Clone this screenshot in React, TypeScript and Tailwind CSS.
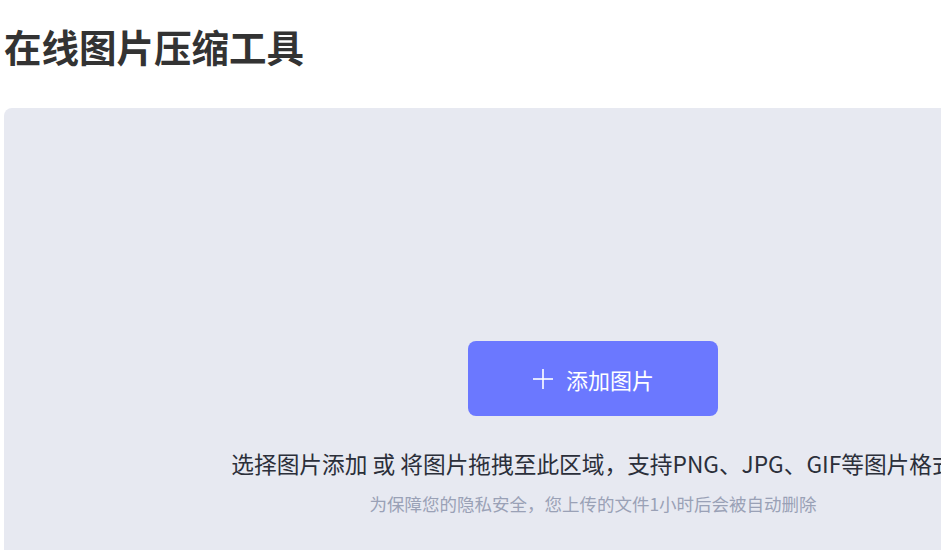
import React from 'react';

const PlusIcon: React.FC = () => (
  <svg width="22" height="22" viewBox="0 0 22 22" fill="none" stroke="currentColor" strokeWidth="1.6">
    <line x1="11" y1="1" x2="11" y2="21" />
    <line x1="1" y1="11" x2="21" y2="11" />
  </svg>
);

const App: React.FC = () => {
  return (
    <div
      className="w-[1186px] bg-white px-1 pt-[18px]"
      style={{ fontFamily: '"Noto Sans CJK SC", "Noto Sans", sans-serif' }}
    >
      {/* 标题 */}
      <h1 className="text-[37.5px] font-bold leading-[56px] text-[#333333]">在线图片压缩工具</h1>

      {/* 上传区域 */}
      <div className="mt-[34px] flex h-[460px] w-[1178px] flex-col items-center rounded-lg bg-[#e7e9f1] pt-[233px]">
        <button className="flex h-[75px] w-[250px] items-center justify-center gap-[12px] rounded-lg bg-[#6b78ff] text-white">
          <PlusIcon />
          <span className="text-[22px] leading-none">添加图片</span>
        </button>
        <p className="mt-[33px] text-[22.7px] leading-[30px] text-[#2b2f3a]">
          选择图片添加 或 将图片拖拽至此区域，支持PNG、JPG、GIF等图片格式
        </p>
        <p className="mt-[12px] text-[17.5px] leading-[26px] text-[#9aa1b6]">
          为保障您的隐私安全，您上传的文件1小时后会被自动删除
        </p>
      </div>
    </div>
  );
};

export default App;
